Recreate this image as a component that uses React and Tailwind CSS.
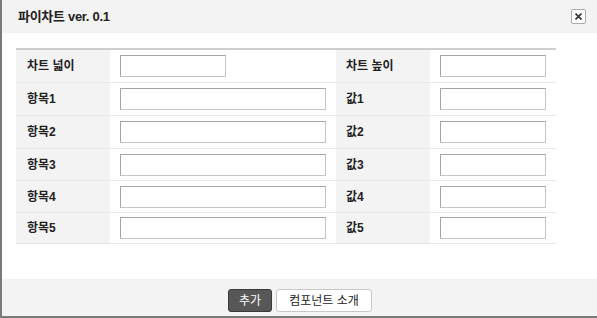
const font = { fontFamily: '"Liberation Sans", "Noto Sans CJK KR", sans-serif' };

const rows = [
  ["차트 넓이", true, "차트 높이", "h-[33px]"],
  ["항목1", false, "값1", "h-[33px]"],
  ["항목2", false, "값2", "h-[33px]"],
  ["항목3", false, "값3", "h-[32px]"],
  ["항목4", false, "값4", "h-[32px]"],
  ["항목5", false, "값5", "h-[31px]"],
];

function Field({ wide }) {
  return (
    <input
      className={`${wide ? "w-[206px]" : "w-[106px]"} h-[22px] bg-white border border-[#c4c4c4] border-t-[#a5a5a5] border-l-[#a5a5a5] outline-none`}
    />
  );
}

export default function App() {
  return (
    <div
      className="w-[602px] h-[318px] flex flex-col border-l-2 border-b-2 border-[#7a7a7a] bg-white text-[#222]"
      style={font}
    >
      <div className="h-[33px] shrink-0 bg-[#f3f3f3] flex items-center justify-between pl-[16px] pr-[16px]">
        <span className="text-[13px] font-bold tracking-[-0.3px]">파이차트 ver. 0.1</span>
        <button className="w-[15px] h-[15px] flex items-center justify-center border border-[#aaa] rounded-[2px] bg-white text-[#333]">
          <svg width="7" height="7" viewBox="0 0 7 7">
            <path d="M0.5 0.5 L6.5 6.5 M6.5 0.5 L0.5 6.5" stroke="#333" strokeWidth="1.6" />
          </svg>
        </button>
      </div>

      <div className="flex-1 pt-[15px] pl-[14px]">
        <div className="w-[540px] border-t-2 border-[#cdcdcd]">
          {rows.map(([label, short, label2, h]) => (
            <div key={label} className={`grid grid-cols-[94px_226px_94px_126px] ${h} border-b border-[#e8e8e8]`}>
              <div className="bg-[#f3f3f3] flex items-center pl-[11px] text-[12px] font-bold">{label}</div>
              <div className="flex items-center pl-[10px]">
                <Field wide={!short} />
              </div>
              <div className="bg-[#f3f3f3] flex items-center pl-[10px] text-[12px] font-bold">{label2}</div>
              <div className="flex items-center pl-[10px]">
                <Field />
              </div>
            </div>
          ))}
        </div>
      </div>

      <div className="h-[37px] shrink-0 bg-[#f3f3f3] flex items-start justify-center gap-[4px] pt-[10px] pr-[4px]">
        <button className="w-[44px] h-[23px] rounded-[3px] bg-[#575757] border border-[#3a3a3a] text-white text-[12px]">
          추가
        </button>
        <button className="w-[96px] h-[23px] rounded-[3px] bg-white border border-[#c8c8c8] text-[#222] text-[12px]">
          컴포넌트 소개
        </button>
      </div>
    </div>
  );
}
